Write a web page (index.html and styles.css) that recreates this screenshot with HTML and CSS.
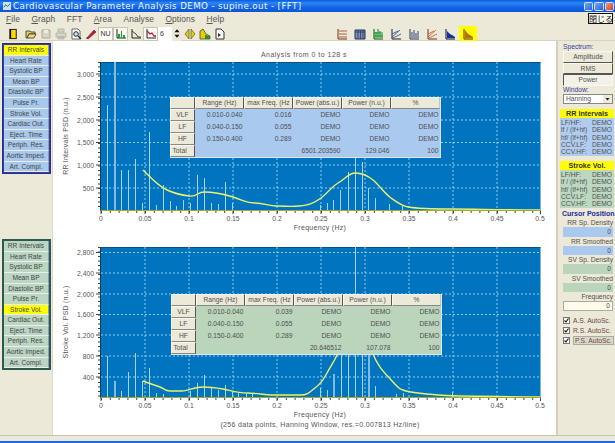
FILE: index.html
```html
<!DOCTYPE html>
<html lang="en">
<head>
<meta charset="utf-8">
<title>Cardiovascular Parameter Analysis DEMO</title>
<link rel="stylesheet" href="styles.css">
</head>
<body>
<div class="window">
  <header class="titlebar">
    <svg class="app-icon" viewBox="0 0 9 9"><rect width="9" height="9" fill="#cfe0f0"/><path d="M1 6l2-3 2 2 3-3" stroke="#207040" fill="none"/></svg>
    <span class="title-text">Cardiovascular Parameter Analysis DEMO - supine.out - [FFT]</span>
    <span class="win-btns"><i class="win-btn"></i><i class="win-btn"></i><i class="win-btn win-close"></i></span>
    <span class="tooltip">閉じる</span>
  </header>
  <nav class="menubar">
    <span><u>F</u>ile</span><span><u>G</u>raph</span><span>FFT</span><span><u>A</u>rea</span><span>Analyse</span><span><u>O</u>ptions</span><span><u>H</u>elp</span>
  </nav>
  <div class="toolbar">
    <div class="tools tools-first"><span class="tool"><svg viewBox="0 0 12 13"><rect x="2" y="1" width="8" height="11" fill="#111"/><rect x="4" y="2" width="5" height="9" fill="#ffd800"/></svg></span></div>
    <div class="tools tools-main">
      <span class="tool"><svg viewBox="0 0 12 12"><path d="M1 3h4l1 1h4v2H4L2 10H1z" fill="#e8c860" stroke="#333" stroke-width=".8"/><path d="M4 6h7l-2 4H2z" fill="#f0d880" stroke="#333" stroke-width=".8"/></svg></span>
      <span class="tool"><svg viewBox="0 0 12 12"><path d="M2 2h8v8H2z" fill="#d8d5c4" stroke="#aaa8a0"/><path d="M4 2h4v3H4z" fill="#eeebdd"/></svg></span>
      <span class="tool"><svg viewBox="0 0 12 12"><path d="M3 1h6v3H3zM1 5h10v4H1zM3 9h6v2H3z" fill="#d8d5c4" stroke="#aaa8a0" stroke-width=".7"/></svg></span>
      <span class="tool"><svg viewBox="0 0 12 12"><path d="M2 1h6l2 2v8H2z" fill="#fff" stroke="#444" stroke-width=".8"/><circle cx="6" cy="6" r="2.3" fill="#cfe4f5" stroke="#222"/><path d="M8 8l3 3" stroke="#222" stroke-width="1.3"/></svg></span>
      <span class="tool"><svg viewBox="0 0 12 12"><path d="M2 10l7-8 2 2-8 7z" fill="#c01830" stroke="#701020" stroke-width=".6"/><path d="M1 11l1-2 1 1z" fill="#222"/></svg></span>
      <span class="tool tool-on tool-text">NU</span>
      <span class="tool tool-on"><svg viewBox="0 0 12 12"><path d="M2 1v9h9" stroke="#222" fill="none"/><path d="M3 10V6h2v4zM6 10V3h1v7zM8 10V7h2v3z" fill="#18a030"/></svg></span>
      <span class="tool"><svg viewBox="0 0 12 12"><path d="M2 1v9h9" stroke="#222" fill="none"/><path d="M2 3l4 3 2 3h3" stroke="#444" fill="none"/></svg></span>
      <span class="tool tool-on"><svg viewBox="0 0 12 12"><path d="M2 1v9h9" stroke="#222" fill="none"/><path d="M2 3l3 3 2-1 2 3h2" stroke="#d01038" stroke-width="1.3" fill="none"/></svg></span>
      <span class="spin"><span class="spin-val">6</span><span class="spin-arrows"><svg viewBox="0 0 7 12"><path d="M3.500 1l3 3.500H.5zM3.500 11l3-3.500H.5z" fill="#111"/></svg></span></span>
      <span class="tool tool-wide"><svg viewBox="0 0 12 12"><path d="M5 1v10L1 6zM7 1v10l4-5z" fill="#e8d000" stroke="#554" stroke-width=".7"/></svg></span>
      <span class="tool"><svg viewBox="0 0 12 12"><path d="M1 11V3l3-2 3 5 4 2v3z" fill="#e8d000" stroke="#333" stroke-width=".7"/><path d="M6 11V7l5 1v3z" fill="#28902c"/></svg></span>
      <span class="tool"><svg viewBox="0 0 12 12"><path d="M2 1h5l3 3v7H2z" fill="#f8f8f8" stroke="#333"/><path d="M4 5l3 2-3 2z" fill="#333"/></svg></span>
    </div>
    <div class="tools tools-right">
      <span class="tool2"><svg viewBox="0 0 12 12"><path d="M2 1v10h9" stroke="#7a3020" fill="none"/><path d="M3 3h8M3 6h8M3 9h8" stroke="#b06040"/></svg></span>
      <span class="tool2"><svg viewBox="0 0 12 12"><path d="M1 2h10v9H1z" fill="#8090b0" stroke="#203060"/><path d="M1 4h10M4 2v9M6.500 2v9M9 2v9" stroke="#203060" stroke-width=".7"/></svg></span>
      <span class="tool2"><svg viewBox="0 0 12 12"><path d="M2 1v10h9" stroke="#105010" fill="none"/><path d="M4 10V4M6 10V1M8 10V3M10 10V6M2 5h9M2 8h9" stroke="#189030" stroke-width="1.100"/></svg></span>
      <span class="tool2"><svg viewBox="0 0 12 12"><path d="M2 1v10h9" stroke="#223" fill="none"/><path d="M2 9l8-7M2 6l6-3M3 10l8-4" stroke="#224088" stroke-width=".8" fill="none"/></svg></span>
      <span class="tool2"><svg viewBox="0 0 12 12"><path d="M2 1v10h9" stroke="#334" fill="none"/><path d="M4 10V4M6 10V2M8 10V5M10 10V3" stroke="#405090" stroke-width="1.100"/></svg></span>
      <span class="tool2"><svg viewBox="0 0 12 12"><path d="M2 1v10h9" stroke="#7a3020" fill="none"/><path d="M2 9l8-7M2 6l6-3M3 10l8-4" stroke="#c05030" stroke-width=".8" fill="none"/></svg></span>
      <span class="tool2"><svg viewBox="0 0 12 12"><path d="M2 1v10h9" stroke="#112" fill="none"/><path d="M3 10V3l3 3 2 1 3 2v1z" fill="#1030a0"/></svg></span>
      <span class="tool2 tool-active"><svg viewBox="0 0 12 12"><path d="M2 1v10h9" stroke="#532" fill="none"/><path d="M3 10V2l3 4 2 1 3 2v1z" fill="#c06810"/></svg></span>
    </div>
  </div>
  <div class="main">
    <aside class="left">
      <ul class="selector selector-blue">
        <li class="on">RR Intervals</li><li>Heart Rate</li><li>Systolic BP</li><li>Mean BP</li><li>Diastolic BP</li><li>Pulse Pr.</li><li>Stroke Vol.</li><li>Cardiac Out.</li><li>Eject. Time</li><li>Periph. Res.</li><li>Aortic Imped.</li><li>Art. Compl.</li>
      </ul>
      <ul class="selector selector-green">
        <li>RR Intervals</li><li>Heart Rate</li><li>Systolic BP</li><li>Mean BP</li><li>Diastolic BP</li><li>Pulse Pr.</li><li class="on">Stroke Vol.</li><li>Cardiac Out.</li><li>Eject. Time</li><li>Periph. Res.</li><li>Aortic Imped.</li><li>Art. Compl.</li>
      </ul>
    </aside>
    <section class="charts">
      <div class="chart">
        <svg class="plot" viewBox="53 41 503 197">
          <text class="t-title" x="304" y="57">Analysis from 0 to 128 s</text>
          <rect class="bg" x="100.500" y="62" width="440" height="148"/>
          <path class="edge" d="M100.500 210V62.500H540.500"/>
          <path class="grid" d="M101 74H540M101 97H540M101 120H540M101 142.500H540M101 165H540M101 188H540M145 62V210M189 62V210M233 62V210M277 62V210M321 62V210M365 62V210M409 62V210M453 62V210M497 62V210"/>
          <path class="bars" d="M107.500 210V105M121.500 210V170M128.500 210V170M135.500 210V159M142.500 210V203M149.500 210V132M156.500 210V205M163.500 210V185M170.500 210V201M176.500 210V206M183.500 210V200M190.500 210V203M197.500 210V175M204.500 210V178M211.500 210V203M218.500 210V204M225.500 210V182M232.500 210V203M320.500 210V205M327.500 210V203M333.500 210V200M340.500 210V190M348.500 210V172M355.500 210V155M362.500 210V162M368.500 210V188M375.500 210V198M389.500 210V204M402.500 210V206"/>
          <path class="bars-thick" d="M115 210V62"/>
          <path class="curve" d="M143 170C150 177 158 186 167 190S180 195 189 196 197 192 204 192 220 193 233 197 245 203 255 203 268 206 277 206 290 207 299 206 313 204 321 198 331 187 338 183 349 173 355 173 367 175 373 180 384 193 391 198 402 206 408 207 430 209 452 209 500 210 540 210"/>
          <path class="axis" d="M100.500 62V210.500H540.500"/>
          <path class="axis-x" d="M101 210.500H540"/>
          <path class="ticks-major" d="M96 74H100M96 97H100M96 120H100M96 142.500H100M96 165H100M96 188H100M101 211V214M145 211V214M189 211V214M233 211V214M277 211V214M321 211V214M365 211V214M409 211V214M453 211V214M497 211V214M540.500 211V214"/>
          <path class="ticks-y" d="M99 62V210"/>
          <path class="ticks-x" d="M101 212H540"/>
          <g class="t-y"><text x="94" y="76.500">3,000</text><text x="94" y="99.500">2,500</text><text x="94" y="122.500">2,000</text><text x="94" y="145">1,500</text><text x="94" y="167.500">1,000</text><text x="94" y="190.500">500</text></g>
          <g class="t-x"><text x="101" y="221">0</text><text x="145" y="221">0.05</text><text x="189" y="221">0.1</text><text x="233" y="221">0.15</text><text x="277" y="221">0.2</text><text x="321" y="221">0.25</text><text x="365" y="221">0.3</text><text x="409" y="221">0.35</text><text x="453" y="221">0.4</text><text x="497" y="221">0.45</text><text x="540" y="221">0.5</text></g>
          <text class="t-x-label" x="320" y="230">Frequency (Hz)</text>
          <text class="t-y-label" transform="translate(68 136) rotate(-90)">RR Intervals PSD (n.u.)</text>
        </svg>
        <table class="stats stats-blue">
          <tr><th></th><th>Range (Hz)</th><th>max Freq. (Hz</th><th>Power (abs.u.)</th><th>Power (n.u.)</th><th>%</th></tr>
          <tr><th>VLF</th><td>0.010-0.040</td><td>0.016</td><td>DEMO</td><td>DEMO</td><td>DEMO</td></tr>
          <tr><th>LF</th><td>0.040-0.150</td><td>0.055</td><td>DEMO</td><td>DEMO</td><td>DEMO</td></tr>
          <tr><th>HF</th><td>0.150-0.400</td><td>0.289</td><td>DEMO</td><td>DEMO</td><td>DEMO</td></tr>
          <tr><th class="left-th">Total</th><td></td><td></td><td>6501.203590</td><td>129.046</td><td>100</td></tr>
        </table>
      </div>
      <div class="chart">
        <svg class="plot" viewBox="53 238 503 197">
          <rect class="bg" x="100.500" y="247" width="440" height="150"/>
          <path class="edge" d="M100.500 397V247.500H540.500"/>
          <path class="grid" d="M101 252.500H540M101 273H540M101 294H540M101 314.500H540M101 335H540M101 356H540M101 377H540M145 247V397M189 247V397M233 247V397M277 247V397M321 247V397M365 247V397M409 247V397M453 247V397M497 247V397"/>
          <path class="bars" d="M107.500 397V356M121.500 397V391M128.500 397V372M135.500 397V353M142.500 397V381M149.500 397V368M156.500 397V393M163.500 397V394M190.500 397V391M197.500 397V383M204.500 397V375M211.500 397V388M218.500 397V390M225.500 397V385M232.500 397V392M238.500 397V393M246.500 397V394M252.500 397V394M320.500 397V388M327.500 397V390M341.500 397V300M348.500 397V300M355.500 397V247M362.500 397V300M375.500 397V386M396.500 397V394M403.500 397V393M452.500 397V392"/>
          <path class="bars-thick" d="M115 397V381M334 397V374M369 397V340"/>
          <path class="curve" d="M143 381C150 384 155 385 160 387S165 391 170 391 177 391 182 391 195 387 203 387 217 388 223 389 238 393 247 393 265 395 273 395 292 395 300 395 310 392 315 388 322 382 327 373 334 362 338 353 345 335 355 325 365 335 372 352 386 374 393 382 399 388 403 390 417 393 427 394 445 396 460 396 500 397 540 397"/>
          <path class="axis" d="M100.500 247V397.500H540.500"/>
          <path class="axis-x" d="M101 397.500H540"/>
          <path class="ticks-major" d="M96 252.500H100M96 273H100M96 294H100M96 314.500H100M96 335H100M96 356H100M96 377H100M101 398V401M145 398V401M189 398V401M233 398V401M277 398V401M321 398V401M365 398V401M409 398V401M453 398V401M497 398V401M540.500 398V401"/>
          <path class="ticks-y" d="M99 247V397"/>
          <path class="ticks-x" d="M101 399H540"/>
          <g class="t-y"><text x="94" y="255">2,800</text><text x="94" y="275.500">2,400</text><text x="94" y="296.500">2,000</text><text x="94" y="317">1,600</text><text x="94" y="337.500">1,200</text><text x="94" y="358.500">800</text><text x="94" y="379.500">400</text></g>
          <g class="t-x"><text x="101" y="408">0</text><text x="145" y="408">0.05</text><text x="189" y="408">0.1</text><text x="233" y="408">0.15</text><text x="277" y="408">0.2</text><text x="321" y="408">0.25</text><text x="365" y="408">0.3</text><text x="409" y="408">0.35</text><text x="453" y="408">0.4</text><text x="497" y="408">0.45</text><text x="540" y="408">0.5</text></g>
          <text class="t-x-label" x="320" y="417">Frequency (Hz)</text>
          <text class="t-note" x="320" y="427">(256 data points, Hanning Window, res.=0.007813 Hz/line)</text>
          <text class="t-y-label" transform="translate(68 322) rotate(-90)">Stroke Vol. PSD (n.u.)</text>
        </svg>
        <table class="stats stats-green">
          <tr><th></th><th>Range (Hz)</th><th>max Freq. (Hz</th><th>Power (abs.u.)</th><th>Power (n.u.)</th><th>%</th></tr>
          <tr><th>VLF</th><td>0.010-0.040</td><td>0.039</td><td>DEMO</td><td>DEMO</td><td>DEMO</td></tr>
          <tr><th>LF</th><td>0.040-0.150</td><td>0.055</td><td>DEMO</td><td>DEMO</td><td>DEMO</td></tr>
          <tr><th>HF</th><td>0.150-0.400</td><td>0.289</td><td>DEMO</td><td>DEMO</td><td>DEMO</td></tr>
          <tr><th class="left-th">Total</th><td></td><td></td><td>20.646512</td><td>107.078</td><td>100</td></tr>
        </table>
      </div>
    </section>
    <aside class="right">
      <div class="cap cap-first">Spectrum:</div>
      <div class="btn">Amplitude</div>
      <div class="btn">RMS</div>
      <div class="btn btn-down">Power</div>
      <div class="cap">Window:</div>
      <div class="select"><span>Hanning</span><svg viewBox="0 0 8 8"><path d="M2 3h4L4 5.500z" fill="#111"/></svg></div>
      <div class="res-title">RR Intervals</div>
      <dl class="res res-blue">
        <div><dt>LF/HF:</dt><dd>DEMO</dd></div><div><dt>lf / (lf+hf)</dt><dd>DEMO</dd></div><div><dt>hf/ (lf+hf)</dt><dd>DEMO</dd></div><div><dt>CCV.LF:</dt><dd>DEMO</dd></div><div><dt>CCV.HF:</dt><dd>DEMO</dd></div>
      </dl>
      <div class="res-title res-title-2">Stroke Vol.</div>
      <dl class="res res-green">
        <div><dt>LF/HF:</dt><dd>DEMO</dd></div><div><dt>lf / (lf+hf)</dt><dd>DEMO</dd></div><div><dt>hf/ (lf+hf)</dt><dd>DEMO</dd></div><div><dt>CCV.LF:</dt><dd>DEMO</dd></div><div><dt>CCV.HF:</dt><dd>DEMO</dd></div>
      </dl>
      <div class="cursor-title">Cursor Position</div>
      <div class="lab lab-first">RR Sp. Density</div><div class="val val-blue">0</div>
      <div class="lab">RR Smoothed</div><div class="val val-blue">0</div>
      <div class="lab">SV Sp. Density</div><div class="val val-green">0</div>
      <div class="lab">SV Smoothed</div><div class="val val-green">0</div>
      <div class="lab">Frequency</div><div class="val val-cream">0</div>
      <div class="check check-first"><svg viewBox="0 0 7 7"><rect x=".5" y=".5" width="6" height="6" fill="#fff" stroke="#777"/><path d="M1.500 3.500l1.500 1.500 2.500-3.500" stroke="#111" stroke-width="1.100" fill="none"/></svg><span>A.S. AutoSc.</span></div>
      <div class="check"><svg viewBox="0 0 7 7"><rect x=".5" y=".5" width="6" height="6" fill="#fff" stroke="#777"/><path d="M1.500 3.500l1.500 1.500 2.500-3.500" stroke="#111" stroke-width="1.100" fill="none"/></svg><span>R.S. AutoSc.</span></div>
      <div class="check check-boxed"><svg viewBox="0 0 7 7"><rect x=".5" y=".5" width="6" height="6" fill="#fff" stroke="#777"/><path d="M1.500 3.500l1.500 1.500 2.500-3.500" stroke="#111" stroke-width="1.100" fill="none"/></svg><span>P.S. AutoSc.</span></div>
    </aside>
  </div>
  <div class="statusline"></div>
  <div class="taskbar"></div>
</div>
</body>
</html>
```
FILE: styles.css
```css
* { box-sizing: border-box; }
html, body { margin: 0; padding: 0; }
body { width: 615px; height: 443px; overflow: hidden; background: #ece9d8; font-family: "Liberation Sans", Arial, sans-serif; color: #444; }
ul, dl, dd { margin: 0; padding: 0; list-style: none; }
.window { width: 615px; height: 443px; display: flex; flex-direction: column; }

.titlebar { height: 12px; flex: none; position: relative; display: flex; align-items: center; padding-left: 3px; background: linear-gradient(#0a5cdc, #2b86f2 25%, #1565e6 60%, #0a55d8); color: #f2f6ff; }
.app-icon { width: 8px; height: 8px; flex: none; margin-right: 2px; }
.title-text { font-size: 8.700px; letter-spacing: 0.390px; font-weight: 400; white-space: nowrap; font-family: "DejaVu Sans", sans-serif; }
.win-btns { margin-left: auto; margin-right: 1px; display: flex; gap: 1px; }
.win-btn { display: block; width: 9.500px; height: 9px; border-radius: 1.500px; background: linear-gradient(135deg, #79a8ee, #2a62d8); border: 1px solid #cfe0fa; }
.win-close { background: linear-gradient(135deg, #ee9a80, #d84020); }
.tooltip { position: absolute; left: 588px; top: 13px; width: 25px; height: 11px; background: #fbf8ea; border: 1px solid #111; color: #111; font: 8px/9px "Noto Sans CJK JP", sans-serif; text-align: center; z-index: 3; white-space: nowrap; }

.menubar { height: 13px; flex: none; display: flex; align-items: center; gap: 11.500px; padding-left: 6px; font-size: 8.400px; color: #555; letter-spacing: .1px; }
.toolbar { height: 16px; flex: none; display: flex; align-items: flex-start; padding-top: 1px; border-bottom: 1px solid #d8d4c0; }
.tools { display: flex; align-items: center; height: 15px; }
.tools-first { margin-left: 5px; }
.tools-main { margin-left: 3px; }
.tools-right { margin-left: 106px; }
.tool { width: 15px; height: 14px; display: flex; align-items: center; justify-content: center; }
.tool svg { width: 12px; height: 12px; }
.tool-on { background: #fbfaf3; box-shadow: inset 0 0 0 1px #c8c4b0; }
.tool-text { font-size: 7px; color: #333; }
.tool-wide { margin-left: 0; }
.tool2 { width: 18px; height: 15px; display: flex; align-items: center; justify-content: center; }
.tool2 svg { width: 12px; height: 12px; }
.tool-active { background: #ffff00; }
.spin { width: 24px; height: 14px; display: flex; background: #fff; align-items: center; margin-right: 0; }
.spin-val { font-size: 7px; width: 14px; padding-left: 2px; color: #333; }
.spin-arrows { width: 10px; height: 14px; background: #ece9d8; display: flex; align-items: center; justify-content: center; }
.spin-arrows svg { width: 6px; height: 11px; }

.main { flex: 1; min-height: 0; display: flex; }
.left { width: 53px; flex: none; padding: 2px 0 0 2px; background: #ece9d8; border-right: 1px solid #dcd8c4; }
.selector { width: 49px; padding: 1px; border: 1px solid; font-size: 6.600px; text-align: center; color: #444; }
.selector li { height: 10.600px; line-height: 10.200px; white-space: nowrap; border-bottom: 1px solid #e8ecf4; border-right: 1px solid #8a9ab8; }
.selector-blue { border-color: #26308c; background: #26308c; box-shadow: inset 0 0 0 1px #3040a0; }
.selector-blue li { background: #a8c8ec; }
.selector-green { margin-top: 65px; border-color: #2c5a50; background: #2c5a50; }
.selector-green li { background: #bcd6c2; }
.selector li.on { background: #ffff00; }

.charts { flex: 1; min-width: 0; background: #fff; }
.chart { position: relative; height: 197px; }
.plot { display: block; width: 503px; height: 197px; }
.bg { fill: #0074bf; }
.edge { fill: none; stroke: #0b4f7e; stroke-width: 1; }
.grid { fill: none; stroke: #8ccdf0; stroke-width: 1; stroke-dasharray: 2 2; }
.bars { fill: none; stroke: #a3d4f0; stroke-width: 1; }
.bars-thick { fill: none; stroke: #7fbce0; stroke-width: 2; }
.curve { fill: none; stroke: #e8f36a; stroke-width: 1.400; }
.axis { fill: none; stroke: #10405c; stroke-width: 1; }
.axis-x { fill: none; stroke: #a8a828; stroke-width: 1; }
.ticks-major { fill: none; stroke: #444; stroke-width: 1; }
.ticks-y { fill: none; stroke: #444; stroke-width: 2; stroke-dasharray: 1 3.500; }
.ticks-x { fill: none; stroke: #444; stroke-width: 2; stroke-dasharray: 1 7.800; }
.plot text { font-family: "Liberation Sans", Arial, sans-serif; fill: #555; }
.t-title { font-size: 7px; letter-spacing: .480px; text-anchor: middle; }
.t-y text { font-size: 6.800px; text-anchor: end; }
.t-x text { font-size: 6.800px; text-anchor: middle; }
.t-x-label { font-size: 7px; letter-spacing: .300px; text-anchor: middle; }
.t-y-label { font-size: 7px; letter-spacing: .200px; text-anchor: middle; }
.t-note { font-size: 7px; letter-spacing: .320px; text-anchor: middle; }

.stats { position: absolute; top: 56px; left: 117px; width: 269.500px; table-layout: fixed; border-collapse: separate; border-spacing: 0; font-size: 6.700px; color: #505050; border-bottom: 1px solid #dfe6ee; border-right: 1px solid #dfe6ee; }
.stats-green { left: 118px; }
.stats-blue { background: #a9c9ef; }
.stats-green { background: #bad5bc; }
.stats tr { height: 11.600px; }
.stats th, .stats td { padding: 0 1.500px; height: 11.600px; line-height: 10px; white-space: nowrap; overflow: hidden; }
.stats th { width: 49px; background: #ece9d8; font-weight: 400; text-align: center; border-top: 1px solid #fbf9ef; border-left: 1px solid #fbf9ef; border-right: 1px solid #555; border-bottom: 1px solid #888; }
.stats th:first-child { width: 25px; }
.stats tr:first-child th:last-child { border-right-color: #c8c4b0; }
.stats td { text-align: right; }
.stats .left-th { text-align: left; }

.right { width: 59px; flex: none; padding: 0 3px 0 5px; background: #ece9d8; border-left: 2px solid #d4d0bc; font-size: 6.700px; color: #505050; }
.cap { color: #38389a; height: 8px; line-height: 8px; }
.cap-first { margin-top: 2px; }
.btn { width: 50px; height: 11.500px; line-height: 10px; text-align: center; background: #ece9d8; border: 1px solid; border-color: #fbf9ef #555 #555 #fbf9ef; }
.btn-down { border-color: #555 #fbf9ef #fbf9ef #555; background: #f4f2e8; }
.btn + .cap { margin-top: 0; }
.select { width: 50px; height: 10px; display: flex; align-items: center; justify-content: space-between; background: #fff; border: 1px solid #888; padding-left: 2px; margin-top: 0; }
.select svg { width: 9px; height: 8px; background: #ece9d8; }
.res-title { width: 54px; margin: 5px 0 0 -3px; height: 9.500px; line-height: 9.500px; background: #ffff00; text-align: center; font-weight: 700; font-size: 7.200px; color: #333; }
.res-title-2 { margin-top: 4.500px; }
.res { width: 54px; margin-left: -3px; height: 38px; padding: 1px 1px 0 1px; }
.res-blue { background: #b0cdf0; }
.res-green { background: #bcd8c0; }
.res div { display: flex; justify-content: space-between; height: 7.300px; line-height: 7.300px; }
.res dd { margin-right: 1px; }
.cursor-title { margin: 2px 0 0 -1px; font-weight: 700; font-size: 7px; color: #1c2a9c; height: 8px; line-height: 8px; white-space: nowrap; }
.lab { width: 50px; text-align: right; height: 9px; line-height: 9px; white-space: nowrap; }
.lab-first { margin-top: 0; }
.val { width: 50px; height: 9.500px; line-height: 9.500px; text-align: right; padding-right: 2px; }
.val-blue { background: #a9c9ef; }
.val-green { background: #bad5bc; }
.val-cream { background: #fffbe8; border: 1px solid #aaa; line-height: 7.500px; }
.check { display: flex; align-items: center; gap: 3px; height: 10px; color: #6a4444; white-space: nowrap; }
.check svg { width: 7px; height: 7px; flex: none; }
.check-first { margin-top: 5px; }
.check-boxed span { background: #ddd9c8; border: 1px solid #aaa; padding: 0 1px; line-height: 7px; }

.statusline { height: 6px; flex: none; background: #ece9d8; border-top: 1px solid #c8c4b0; }
.taskbar { height: 2px; flex: none; background: #1c6ae4; }
```
